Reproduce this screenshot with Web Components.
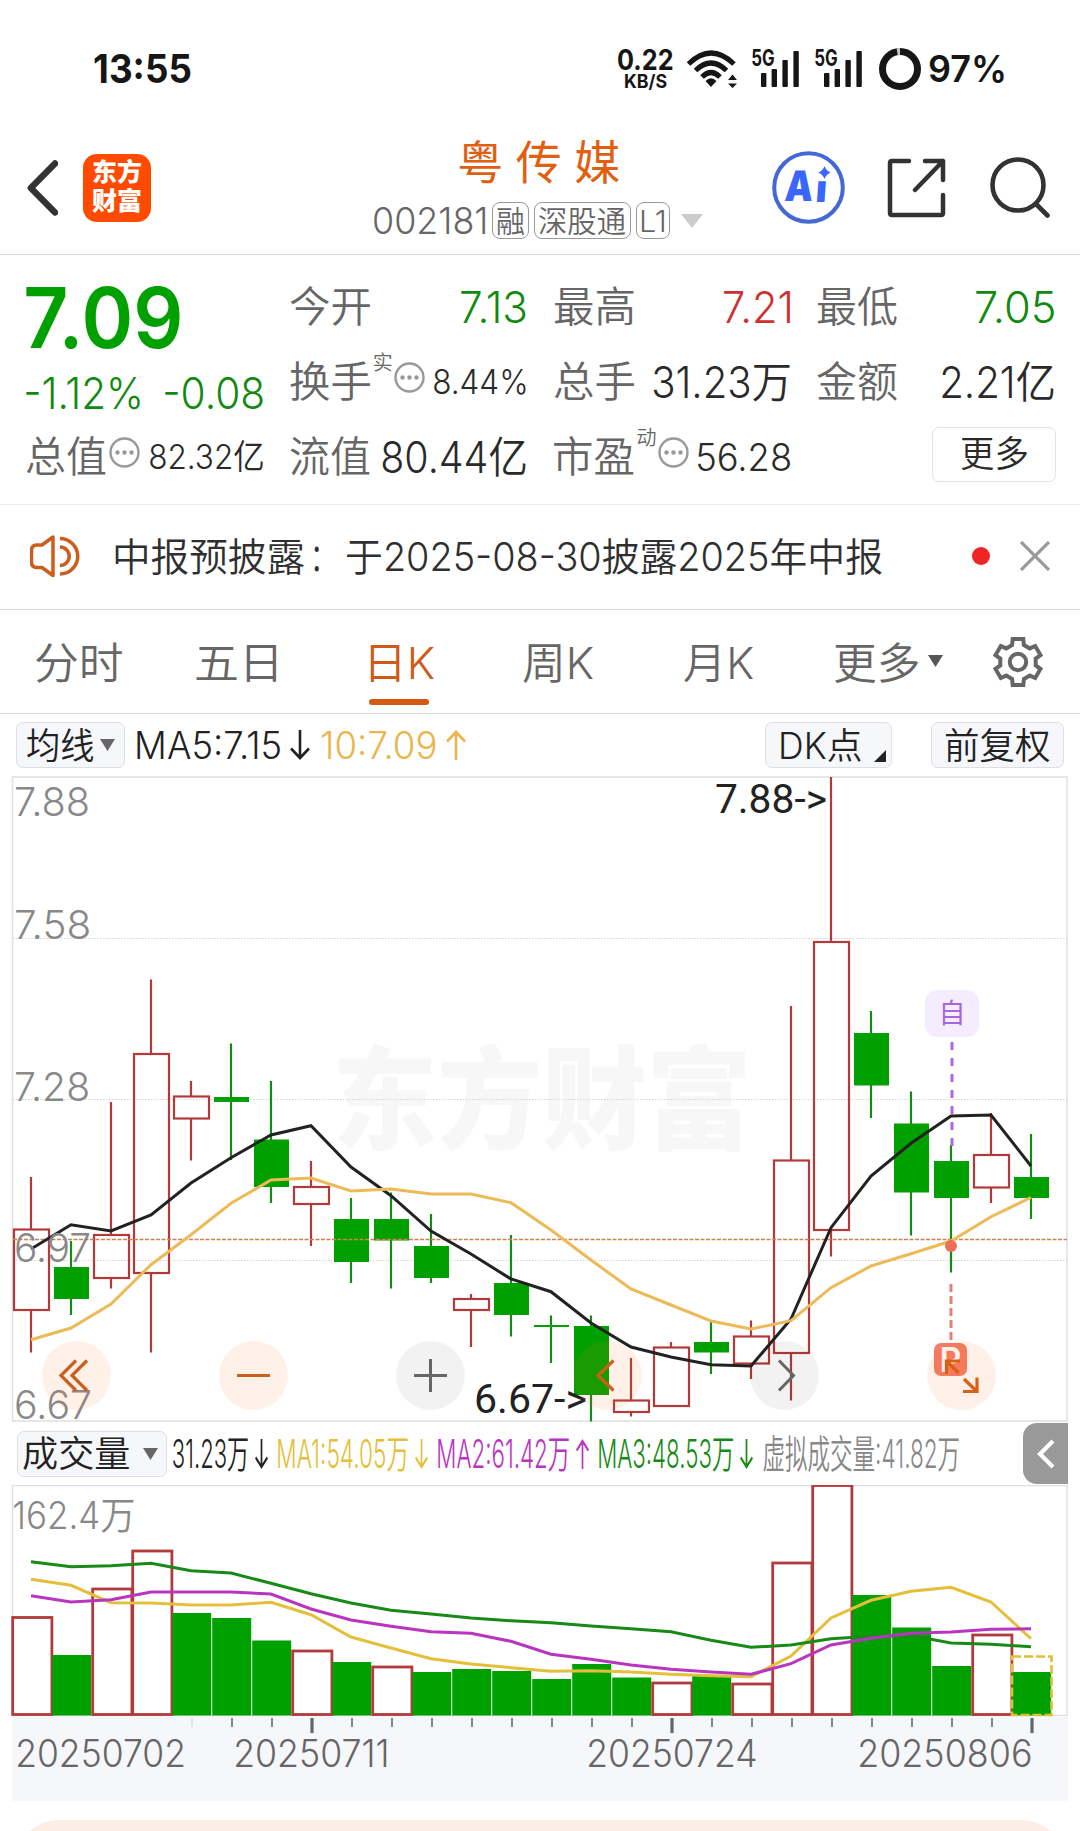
<!DOCTYPE html>
<html lang="zh-CN">
<head>
<meta charset="utf-8">
<title>粤传媒 002181</title>
<style>
  html, body {
    margin: 0;
    background: #fff;
  }

  body {
    width: 1080px;
    height: 1831px;
    overflow: hidden;
    color: #2a2a2a;
    font-family: Inter, "Noto Sans CJK SC", sans-serif;
    font-weight: 350;
  }
</style>
</head>
<body>
<status-bar></status-bar>
<stock-header code="002181">粤传媒</stock-header>
<quote-panel></quote-panel>
<notice-bar>中报预披露：于2025-08-30披露2025年中报</notice-bar>
<period-tabs></period-tabs>
<average-row></average-row>
<kline-chart></kline-chart>
<volume-row></volume-row>
<volume-chart></volume-chart>
<time-axis></time-axis>
<bottom-card></bottom-card>

<script>
const define = (name, html, setup) => {
  const template = document.createElement("template");
  template.innerHTML = html;

  customElements.define(name, class extends HTMLElement {
    constructor() {
      super();
      this.attachShadow({ mode: "open" }).appendChild(template.content.cloneNode(true));
    }

    connectedCallback() {
      if (setup) setup(this, this.shadowRoot);
    }
  });
};

const canvas = document.createElement("canvas").getContext("2d");

// Text stretched horizontally so that its ink fills exactly `w` pixels
define("fit-text", `
  <style>
    :host { display: block; flex: none; white-space: nowrap; }
    span { display: inline-block; transform-origin: 0 50%; }
  </style>
  <span><slot></slot></span>
`, (host, root) => {
  const style = getComputedStyle(host);
  const w = Number(host.getAttribute("w"));
  canvas.font = `${style.fontWeight} ${style.fontSize} ${style.fontFamily}`;
  const m = canvas.measureText(host.textContent.trim());
  const scale = w / (m.actualBoundingBoxLeft + m.actualBoundingBoxRight);
  host.style.width = w + "px";
  root.querySelector("span").style.transform =
    `translateX(${m.actualBoundingBoxLeft * scale}px) scaleX(${scale})`;
});

define("signal-bars", `
  <style>
    :host { display: block; width: 47px; height: 38px; position: relative; }
    svg { display: block; }
    fit-text { position: absolute; left: 0; top: -1px; font-size: 22.5px; line-height: 18px; font-weight: 700; }
  </style>
  <fit-text w="22">5G</fit-text>
  <svg width="47" height="38" fill="#161616">
    <rect x="9" y="23" width="5.4" height="14" rx="1"/>
    <rect x="19.6" y="19" width="5.4" height="18" rx="1"/>
    <rect x="30.4" y="10" width="5.4" height="27" rx="1"/>
    <rect x="41.4" y="1" width="5.4" height="36" rx="1"/>
  </svg>
`);

define("status-bar", `
  <style>
    :host {
      display: flex; align-items: center; box-sizing: border-box;
      height: 138px; padding: 0 76px 0 94px; color: #161616; font-weight: 700;
    }
    .time { font-size: 39px; margin-right: auto; line-height: 40px; }
    .net { display: flex; flex-direction: column; align-items: center; width: 55px; font-size: 28px; line-height: 21px; }
    .net .unit { font-size: 18.500px; line-height: 15px; margin-top: 3px; }
    .wifi { margin: 0 14px 0 14px; }
    .ring { margin: 0 8px 0 17px; }
    signal-bars + signal-bars { margin-left: 16px; }
    .pct { font-size: 37px; line-height: 40px; font-weight: 600; }
  </style>
  <fit-text class="time" w="97">13:55</fit-text>
  <div class="net"><fit-text w="55">0.22</fit-text><fit-text class="unit" w="42">KB/S</fit-text></div>
  <svg class="wifi" width="51" height="38" viewBox="0 0 51 38" fill="none" stroke="#161616" stroke-width="5">
    <path d="M1.500 14Q24 -8 47 14M8.500 20.500Q24 5.500 39.500 20.500M15 27Q24 18 33 27"/>
    <path d="M24 37L18.500 31Q24 25.500 29.500 31ZM45.500 24.500L50 30H41ZM45.500 38L41 33.500H50Z" fill="#161616" stroke="none"/>
  </svg>
  <signal-bars></signal-bars>
  <signal-bars></signal-bars>
  <svg class="ring" width="42" height="42" fill="none" stroke-width="7">
    <circle cx="21" cy="21" r="17.500" stroke="#161616"/>
    <path d="M18.200 3.700A17.500 17.500 0 0 1 21 3.500" stroke="#c8c8c8"/>
  </svg>
  <fit-text class="pct" w="75">97%</fit-text>
`);

define("stock-header", `
  <style>
    :host {
      display: flex; align-items: center; box-sizing: border-box;
      height: 117px; padding: 0 29px 17px 27px; border-bottom: 1.5px solid #d8d8d8;
    }
    svg { display: block; flex: none; }
    .logo {
      display: flex; flex-direction: column; align-items: center; justify-content: center;
      width: 68px; height: 68px; margin-left: 25px; border-radius: 14px;
      background: #ff4a00; color: #fff; font-size: 25px; line-height: 29px; font-weight: 900;
    }
    .logo span { position: relative; top: -1px; }
    .name { width: 330px; margin: 0 69px 0 223px; }
    .title {
      height: 44px; margin-top: 4px; color: #e06010; font-size: 46px; line-height: 44px; font-weight: 400;
      letter-spacing: 12.5px; text-indent: 13px; text-align: center; white-space: nowrap;
    }
    .sub { display: flex; align-items: center; height: 37px; margin-top: 18px; color: #666; }
    .code { font-size: 37px; line-height: 37px; margin-right: 7px; }
    .tag {
      display: flex; align-items: center; justify-content: center; box-sizing: border-box;
      height: 37px; margin-right: 5px; border: 1.5px solid #999; border-radius: 8px;
      font-size: 30px; line-height: 36px;
    }
    .ai { position: relative; }
    .ai fit-text {
      position: absolute; left: 13px; top: 18px; color: #3a66fb;
      font-size: 42px; line-height: 34px; font-weight: 900; transform: skewX(-4deg);
    }
    .ai .i { left: 45px; top: 20px; font-size: 38px; }
  </style>
  <svg width="31" height="56" fill="none" stroke="#333" stroke-width="6.500" stroke-linecap="round" stroke-linejoin="round">
    <path d="M28 3.500L3.800 28L28 52.500"/>
  </svg>
  <div class="logo"><span>东方</span><span>财富</span></div>
  <div class="name">
    <div class="title"><slot></slot></div>
    <div class="sub">
      <fit-text class="code" w="111"></fit-text>
      <div class="tag" style="width:37px"><fit-text w="27">融</fit-text></div>
      <div class="tag" style="width:97px"><fit-text w="87">深股通</fit-text></div>
      <div class="tag" style="width:34px"><fit-text w="23">L1</fit-text></div>
      <svg width="22" height="14" style="margin-left:6px"><path d="M0 0H22L11 14Z" fill="#ccc"/></svg>
    </div>
  </div>
  <div class="ai">
    <svg width="73" height="73">
      <circle cx="36.500" cy="36.500" r="34.300" fill="none" stroke="#4468d4" stroke-width="4"/>
    </svg>
    <fit-text w="28">A</fit-text><fit-text class="i" w="9">ı</fit-text>
    <svg width="13" height="13" style="position:absolute;left:46px;top:15px">
      <path d="M6.500 0Q8 4.500 12.500 6.500Q8 8.500 6.500 13Q5 8.500 .5 6.500Q5 4.500 6.500 0Z" fill="#3a66fb"/>
    </svg>
  </div>
  <svg width="60" height="60" style="margin-left:42px" fill="none" stroke="#333" stroke-width="4.500" stroke-linecap="round" stroke-linejoin="round">
    <path d="M22 3H5Q3 3 3 5V55Q3 57 5 57H54Q56 57 56 55V37M38 3H56V22M56 3L28 32"/>
  </svg>
  <svg width="61" height="61" style="margin-left:43px" fill="none" stroke="#333" stroke-width="4.600" stroke-linecap="round">
    <circle cx="28" cy="28" r="25.500"/><path d="M46 47L57.500 58.500"/>
  </svg>
`, (host, root) => {
  const code = root.querySelector(".code");
  code.textContent = host.getAttribute("code");
  code.connectedCallback();
});

define("more-icon", `
  <style>:host { display: block; flex: none; width: 31px; height: 31px; } svg { display: block; }</style>
  <svg width="31" height="31">
    <circle cx="15.500" cy="15.500" r="14" fill="none" stroke="#999" stroke-width="2.400"/>
    <g fill="#999"><circle cx="8.500" cy="15.500" r="2.200"/><circle cx="15.500" cy="15.500" r="2.200"/><circle cx="22.500" cy="15.500" r="2.200"/></g>
  </svg>
`);

// One label / value pair; small marks between the two go in the slot "mark"
define("quote-cell", `
  <style>
    :host { display: flex; align-items: center; height: 40px; font-size: 43px; line-height: 44px; }
    .label { color: #666; font-size: 42px; }
    .value { margin-left: auto; display: block; }
    ::slotted([slot=mark]) { flex: none; }
  </style>
  <fit-text class="label" w="80"></fit-text>
  <slot name="mark"></slot>
  <div class="value"><slot></slot></div>
`, (host, root) => {
  const label = root.querySelector(".label");
  label.textContent = host.getAttribute("label");
  label.connectedCallback();
});

define("quote-panel", `
  <style>
    :host {
      display: grid; grid-template-columns: repeat(4, 236.5px); grid-template-rows: repeat(3, 75px);
      column-gap: 27.3px; align-items: center; box-sizing: border-box; height: 250px;
      padding: 14px 26px 0; border-bottom: 1.5px solid #ebebeb;
    }
    .price { grid-row: 1 / 3; align-self: start; padding-top: 15px; color: #00a000; }
    .last { font-size: 84px; line-height: 68px; font-weight: 600; }
    .change { display: flex; justify-content: space-between; margin-top: 21px; color: #128a12; font-size: 43px; line-height: 40px; }
    .up { color: #cd3030; }
    .down { color: #128a12; }
    .small { font-size: 34px; }
    .sup { color: #666; font-size: 20px; line-height: 20px; margin: -38px 2px 0 4px; }
    .more {
      justify-self: end; display: flex; align-items: center; justify-content: center; box-sizing: border-box;
      width: 124px; height: 55px; margin: -5px -2px 0 0; border: 1.5px solid #e4e4e4; border-radius: 7px;
      font-size: 36px; line-height: 36px; padding-bottom: 1px;
    }
    more-icon { margin-top: -8px; }
  </style>
  <div class="price">
    <fit-text class="last" w="154">7.09</fit-text>
    <div class="change"><fit-text w="114">-1.12%</fit-text><fit-text w="98">-0.08</fit-text></div>
  </div>
  <quote-cell label="今开"><fit-text class="down" w="65">7.13</fit-text></quote-cell>
  <quote-cell label="最高"><fit-text class="up" w="66">7.21</fit-text></quote-cell>
  <quote-cell label="最低"><fit-text class="down" w="78">7.05</fit-text></quote-cell>
  <quote-cell label="换手">
    <fit-text slot="mark" class="sup" w="18">实</fit-text><more-icon slot="mark"></more-icon>
    <fit-text class="small" w="92">8.44%</fit-text>
  </quote-cell>
  <quote-cell label="总手"><fit-text w="137">31.23万</fit-text></quote-cell>
  <quote-cell label="金额"><fit-text w="112">2.21亿</fit-text></quote-cell>
  <quote-cell label="总值">
    <more-icon slot="mark" style="margin-left:3px"></more-icon>
    <fit-text class="small" w="113">82.32亿</fit-text>
  </quote-cell>
  <quote-cell label="流值"><fit-text w="144">80.44亿</fit-text></quote-cell>
  <quote-cell label="市盈">
    <fit-text slot="mark" class="sup" w="18">动</fit-text><more-icon slot="mark"></more-icon>
    <fit-text style="font-size:38px" w="92">56.28</fit-text>
  </quote-cell>
  <div class="more"><fit-text w="66">更多</fit-text></div>
`);

define("notice-bar", `
  <style>
    :host {
      display: flex; align-items: center; box-sizing: border-box; height: 105px;
      padding: 0 30px 2px; border-bottom: 1.5px solid #d8d8d8; font-size: 39px; line-height: 44px; color: #2f2f2f;
    }
    svg { display: block; flex: none; }
    .text { display: flex; align-items: center; margin: 2px 90px 0 35px; }
    .colon { margin: 0 28px 0 10px; }
    .dot { width: 18px; height: 18px; border-radius: 50%; background: #f12424; }
  </style>
  <svg width="50" height="44" viewBox="30 534 50 44" fill="none" stroke="#cd5d1d" stroke-width="3.500">
    <path d="M53 537L42 545H37Q31.500 545 31.500 550.500V562Q31.500 567.500 37 567.500H42L53 575.500Z" stroke-linejoin="round"/>
    <path d="M60 547A9.250 9.250 0 0 1 60 565.500M60 538.500A17.750 17.750 0 0 1 60 574"/>
  </svg>
  <div class="text"><fit-text w="189"></fit-text><fit-text class="colon" w="5"></fit-text><fit-text w="535"></fit-text></div>
  <div class="dot"></div>
  <svg width="30" height="30" style="margin-left:30px" stroke="#999" stroke-width="3.200"><path d="M1 1L29 29M29 1L1 29"/></svg>
`, (host, root) => {
  const parts = host.textContent.split(/(：)/);
  root.querySelectorAll("fit-text").forEach((el, i) => {
    el.textContent = parts[i];
    el.connectedCallback();
  });
});

define("period-tabs", `
  <style>
    :host {
      display: flex; align-items: center; box-sizing: border-box; height: 104px;
      padding: 3px 0 0 36px; border-bottom: 1.5px solid #d8d8d8; color: #666; font-size: 43.500px; line-height: 46px;
    }
    .active { position: relative; color: #d05a18; }
    .active::after {
      content: ""; position: absolute; left: -1px; top: 59px; width: 60px; height: 6px;
      border-radius: 3px; background: #d45a14;
    }
    svg { display: block; }
  </style>
  <fit-text w="86">分时</fit-text>
  <fit-text w="81" style="margin-left:74px">五日</fit-text>
  <div class="active" style="margin-left:93px"><fit-text w="64">日K</fit-text></div>
  <fit-text w="70" style="margin-left:89px">周K</fit-text>
  <fit-text w="69" style="margin-left:91px">月K</fit-text>
  <fit-text w="83" style="margin-left:82px">更多</fit-text>
  <svg width="15" height="12" style="margin-left:10px;margin-top:-4px"><path d="M0 0H15L7.500 12Z" fill="#555"/></svg>
  <svg class="gear" width="56" height="56" viewBox="-28 -28 56 56" style="margin-left:47px;margin-top:-3px" fill="none" stroke="#666" stroke-width="4">
    <path/><circle r="8.200"/>
  </svg>
`, (host, root) => {
  const points = [];
  for (let k = 0; k < 6; k++) {
    for (const [r, da] of [[18, -19], [23.500, -13], [23.500, 13], [18, 19]]) {
      const a = (k * 60 + da - 90) * Math.PI / 180;
      points.push((r * Math.cos(a)).toFixed(1) + " " + (r * Math.sin(a)).toFixed(1));
    }
  }
  root.querySelector(".gear path").setAttribute("d", "M" + points.join("L") + "Z");
});

define("chip-button", `
  <style>
    :host {
      display: flex; align-items: center; box-sizing: border-box; height: 46px; flex: none;
      border: 1.5px solid #dedfe3; border-radius: 7px; background: #f6f7fa; font-size: 36.500px; line-height: 44px;
    }
  </style>
  <slot></slot>
`);

define("arrow-mark", `
  <style>:host { display: block; flex: none; } svg { display: block; } :host([up]) svg { transform: scaleY(-1); }</style>
  <svg height="30" viewBox="0 0 20 30" preserveAspectRatio="none" fill="none" stroke="currentColor" stroke-width="2.600">
    <path d="M10 0V27.500M1 18.500L10 28L19 18.500"/>
  </svg>
`, (host, root) => root.querySelector("svg").setAttribute("width", host.getAttribute("w")));

define("average-row", `
  <style>
    :host { display: flex; align-items: center; height: 62px; padding-left: 16px; font-size: 37.500px; line-height: 44px; color: #222; }
    .ten { color: #e8b64c; }
    fit-text { position: relative; top: .5px; }
    svg { display: block; }
  </style>
  <chip-button style="width:109px"><fit-text w="67" style="margin-left:10px">均线</fit-text>
    <svg width="15" height="12" style="margin:-1px 0 0 6px"><path d="M0 0H15L7.500 12Z" fill="#666"/></svg></chip-button>
  <fit-text w="143" style="margin-left:12px">MA5:7.15</fit-text>
  <arrow-mark w="20" style="margin-left:10px"></arrow-mark>
  <fit-text class="ten" w="114" style="margin-left:12px">10:7.09</fit-text>
  <arrow-mark class="ten" up w="20" style="margin-left:10px"></arrow-mark>
  <chip-button style="width:127px;margin-left:299px"><fit-text w="80" style="margin-left:15px">DK点</fit-text>
    <svg width="12" height="12" style="margin:22px 0 0 13px"><path d="M12 0V12H0Z" fill="#222"/></svg></chip-button>
  <chip-button style="width:133px;margin-left:39px"><fit-text w="104" style="margin-left:14px">前复权</fit-text></chip-button>
`);

const GREEN = "#00a000";
const RED = "#b23a3a";
const xOf = i => 31 + 40 * i;
const polyline = (ys, color, width = 3) =>
  `<polyline points="${ys.map((y, i) => xOf(i) + "," + y).join(" ")}" fill="none" stroke="${color}" stroke-width="${width}"/>`;

// [rising, high, body top, body bottom, low]
const candles = [
  [1, 1177, 1229.5, 1310, 1352.5], [0, 1241, 1267, 1299, 1315], [1, 1102, 1235, 1278, 1288.5],
  [1, 979.5, 1054, 1273, 1352.5], [1, 1081, 1096.5, 1118.5, 1160.5], [0, 1043.5, 1097, 1102, 1160],
  [0, 1081, 1139.5, 1187, 1203], [1, 1161, 1187, 1204, 1246], [0, 1198, 1219, 1262, 1283],
  [0, 1192.5, 1219, 1240.5, 1288.5], [0, 1214, 1246, 1278, 1283], [1, 1294, 1299, 1310, 1347],
  [0, 1235, 1283, 1315, 1336.5], [0, 1315.5, 1325, 1327, 1363], [0, 1315.5, 1326, 1395, 1421.5],
  [1, 1358, 1400.5, 1412, 1416.5], [1, 1342, 1347.5, 1406, 1406], [0, 1322, 1342, 1352.5, 1374],
  [1, 1320.5, 1336.5, 1363.5, 1379], [1, 1006, 1160.5, 1353, 1400.5], [1, 777, 942, 1230, 1256.5],
  [0, 1011, 1033, 1085.5, 1118], [0, 1091.5, 1123.5, 1192.5, 1235.5], [0, 1145, 1161, 1198, 1272.5],
  [1, 1113, 1155, 1187.5, 1203], [0, 1134, 1177, 1198, 1219],
];
const ma5 = [1249, 1224.7, 1231, 1215, 1183, 1157.7, 1135, 1125.7, 1167, 1195.7, 1231, 1254, 1279, 1291.7,
  1323, 1347, 1357, 1364.7, 1366, 1319, 1227.7, 1176, 1143.3, 1116, 1115, 1166];
const ma10 = [1339.7, 1328, 1304, 1264.7, 1234.7, 1203.3, 1180, 1178, 1191, 1189, 1194, 1194, 1202.7, 1230,
  1260, 1289, 1305, 1321, 1329, 1320.7, 1287.7, 1266, 1253.7, 1241, 1216.7, 1197.5];

define("kline-chart", `
  <style>
    :host { display: block; position: relative; height: 646px; }
    svg { display: block; }
    fit-text { position: absolute; font-size: 39.500px; line-height: 40px; color: #888; }
    .peak { color: #222; font-family: Roboto, sans-serif; font-size: 40px; font-weight: 400; }
    .mark { font-size: 112px; line-height: 120px; font-weight: 900; color: #f7f7f7; }
    .self, .deal { position: absolute; display: flex; align-items: center; justify-content: center; }
    .self {
      left: 925px; top: 214px; width: 54px; height: 47px; border-radius: 12px; box-sizing: border-box;
      padding-bottom: 4px; background: #f6ecff; color: #a468d8; font-size: 27px; font-weight: 400;
    }
    .deal {
      left: 934px; top: 567px; width: 33px; height: 33px; border-radius: 7px;
      background: #f37c66; color: #fff; font-size: 34px; line-height: 33px; font-weight: 600;
    }
    .over { position: absolute; left: 0; top: 0; }
  </style>
  <fit-text class="mark" w="408" style="left:337px;top:264px">东方财富</fit-text>
  <svg class="plot over" width="1080" height="646" viewBox="0 776 1080 646"></svg>
  <fit-text w="72" style="left:16px;top:6px">7.88</fit-text>
  <fit-text w="73" style="left:16px;top:129px">7.58</fit-text>
  <fit-text w="72" style="left:16px;top:291px">7.28</fit-text>
  <fit-text w="74" style="left:16px;top:452px">6.97</fit-text>
  <fit-text w="75" style="left:16px;top:609px">6.67</fit-text>
  <fit-text class="peak" w="110" style="left:716px;top:4px">7.88-&gt;</fit-text>
  <fit-text class="peak" w="110" style="left:476px;top:604px">6.67-&gt;</fit-text>
  <div class="self">自</div>
  <div class="deal">P</div>
  <svg class="over" width="1080" height="646" viewBox="0 776 1080 646" fill="none">
    <g fill="#ff6a20" fill-opacity=".1">
      <circle cx="76.500" cy="1375.500" r="34.500"/><circle cx="253.500" cy="1375.500" r="34.500"/>
      <circle cx="607.500" cy="1375.500" r="34.500"/><circle cx="961.500" cy="1375.500" r="34.500"/>
    </g>
    <g fill="#000" fill-opacity=".05"><circle cx="430.500" cy="1375.500" r="34.500"/><circle cx="784.500" cy="1375.500" r="34.500"/></g>
    <g stroke="#c9601f" stroke-width="3.200">
      <path d="M76 1360.500L61 1375.500L76 1390.500M87 1360.500L72 1375.500L87 1390.500M237 1375.500H270M613.500 1360.500L598 1375.500L613.500 1390.500"/>
      <path d="M946.500 1374V1361H960M946.500 1361L958.500 1373M964 1379L977 1391.500M963 1391.500H977V1377.500" stroke="#d85f14"/>
    </g>
    <path d="M414 1375.500H447M430.500 1359V1392M779 1360.500L793.500 1375.500L779 1390.500" stroke="#666" stroke-width="3"/>
  </svg>
`, (host, root) => {
  const bodies = candles.map(([up, high, top, bottom, low], i) => {
    const x = xOf(i);
    return up
      ? `<path d="M${x} ${high}V${top}M${x} ${bottom}V${low}" stroke="${RED}" stroke-width="2.200"/>
         <rect x="${x - 17}" y="${top}" width="35" height="${bottom - top}" fill="none" stroke="${RED}" stroke-width="2.200"/>`
      : `<path d="M${x} ${high}V${low}" stroke="#168a16" stroke-width="2.200"/>
         <rect x="${x - 17}" y="${top}" width="35" height="${bottom - top}" fill="${GREEN}"/>`;
  }).join("");

  root.querySelector(".plot").innerHTML = `
    <path d="M12.500 1421V777H1067V1421Z" fill="none" stroke="#e0e0e0" stroke-width="1.500"/>
    <path d="M13 938.500H1067M13 1099.500H1067M13 1260.500H1067" stroke="#d4d4d4" stroke-dasharray="1.500 1.500"/>
    ${bodies}
    <path d="M13 1239.500H1067" stroke="#cf8150" stroke-width="1.400" stroke-dasharray="4 1.500"/>
    ${polyline(ma5, "#222", 3)}${polyline(ma10, "#edba58", 3)}
    <path d="M952 1042V1146" stroke="#a66bdc" stroke-width="3" stroke-dasharray="8 8"/>
    <path d="M951 1284V1341" stroke="#e87f70" stroke-width="3" stroke-dasharray="8 4"/>
    <circle cx="951" cy="1246" r="6" fill="#ee6f58"/>`;
});

define("volume-row", `
  <style>
    :host { display: flex; align-items: center; height: 63px; padding-left: 17px; font-size: 39px; line-height: 44px; color: #222; }
    chip-button { width: 150px; }
    fit-text { margin-left: 10px; }
    arrow-mark { margin-left: 7px; }
    svg { display: block; }
    .drawer {
      display: flex; align-items: center; justify-content: center; width: 45px; height: 61px; margin-left: 64px;
      border-radius: 14px 0 0 14px; background: #999;
    }
  </style>
  <chip-button><fit-text w="106" style="margin-left:5px">成交量</fit-text>
    <svg width="15" height="12" style="margin-left:14px"><path d="M0 0H15L7.500 12Z" fill="#666"/></svg></chip-button>
  <fit-text w="75" style="margin-left:6px">31.23万</fit-text><arrow-mark w="13"></arrow-mark>
  <fit-text w="130" style="color:#e4bf3a">MA1:54.05万</fit-text><arrow-mark w="13" style="color:#e4bf3a"></arrow-mark>
  <fit-text w="131" style="color:#b836bf">MA2:61.42万</fit-text><arrow-mark up w="13" style="color:#b836bf"></arrow-mark>
  <fit-text w="134" style="color:#178a17">MA3:48.53万</fit-text><arrow-mark w="13" style="color:#178a17"></arrow-mark>
  <fit-text w="196" style="color:#888">虚拟成交量:41.82万</fit-text>
  <div class="drawer"><svg width="18" height="30" fill="none" stroke="#fff" stroke-width="4.200"><path d="M16 2L3 15L16 28"/></svg></div>
`);

// [rising, top]
const volumes = [
  [1, 1617.5], [0, 1655], [1, 1589], [1, 1551], [0, 1613], [0, 1618], [0, 1640.5], [1, 1651], [0, 1662],
  [1, 1667], [0, 1672], [0, 1669], [0, 1671], [0, 1679], [0, 1664], [0, 1677.5], [1, 1683], [0, 1676],
  [1, 1684], [1, 1563], [1, 1485.5], [0, 1595], [0, 1627.5], [0, 1666], [1, 1635], [0, 1672],
];
const volumeLines = {
  "#e4bf3a": [1579.3, 1585.3, 1602.7, 1603, 1605, 1605, 1602.3, 1614.7, 1637, 1648, 1658.7, 1664, 1667.7, 1671.3,
    1670.7, 1672, 1674.3, 1675.7, 1676.7, 1656, 1618, 1600.3, 1591.3, 1587.3, 1602, 1638.7],
  "#178a17": [1561.7, 1566.7, 1565.7, 1563.3, 1570.7, 1573, 1583.3, 1593.7, 1603, 1610.3, 1614, 1618, 1620.7, 1622.7,
    1626, 1628.7, 1631.7, 1640.3, 1647.3, 1645, 1638.7, 1636.3, 1635.5, 1643, 1644.3, 1646.7],
  "#b836bf": [1595.7, 1602, 1599.7, 1592, 1592, 1592, 1594, 1609, 1620, 1626.3, 1631.7, 1633.3, 1641.3, 1654.3,
    1659.3, 1665, 1669.3, 1672, 1674.3, 1663.7, 1645, 1638.3, 1633.3, 1632, 1629.3, 1628.7],
};

define("volume-chart", `
  <style>
    :host { display: block; position: relative; height: 232px; }
    svg { display: block; }
    fit-text { position: absolute; left: 14px; top: 11px; font-size: 37.500px; line-height: 40px; color: #888; }
  </style>
  <svg width="1080" height="232" viewBox="0 1485 1080 232"></svg>
  <fit-text w="120">162.4万</fit-text>
`, (host, root) => {
  const bars = volumes.map(([up, top], i) => {
    const x = xOf(i) - 19;
    return up
      ? `<rect x="${x + .7}" y="${top}" width="39.200" height="${1714.5 - top}" fill="none" stroke="${RED}" stroke-width="2.800"/>`
      : `<rect x="${x + .2}" y="${top}" width="39" height="${1715.5 - top}" fill="${GREEN}"/>`;
  }).join("");

  root.querySelector("svg").innerHTML = `
    <path d="M12.500 1715.500V1485.500H1067V1715.500Z" fill="none" stroke="#e0e0e0" stroke-width="1.500"/>
    ${bars}
    <rect x="1012" y="1656.500" width="39.500" height="58.500" fill="none" stroke="#dfc034" stroke-width="2.600" stroke-dasharray="9 3"/>
    ${Object.entries(volumeLines).map(([color, ys]) => polyline(ys, color, 3)).join("")}`;
});

define("time-axis", `
  <style>
    :host { display: block; box-sizing: border-box; height: 84px; margin: 0 12px; background: #f6f7fa; color: #666; }
    svg { display: block; }
    .dates { display: flex; padding: 0 0 0 6px; font-size: 37.500px; line-height: 40px; }
  </style>
  <svg width="1056" height="17" viewBox="12 1717 1056 17"></svg>
  <div class="dates">
    <fit-text w="166">20250702</fit-text>
    <fit-text w="151" style="margin-left:52px">20250711</fit-text>
    <fit-text w="167" style="margin-left:202px">20250724</fit-text>
    <fit-text w="171" style="margin-left:104px">20250806</fit-text>
  </div>
`, (host, root) => {
  let ticks = `<path d="M192 1718V1727" stroke="#ddd" stroke-width="1.500"/>`;
  for (let i = 5; i < 26; i++) {
    const major = (i - 7) % 9 === 0;
    ticks += `<path d="M${xOf(i) + 1} 1718V${major ? 1733 : 1727}" stroke="${major ? "#666" : "#888"}" stroke-width="${major ? 3.2 : 2}"/>`;
  }
  root.querySelector("svg").innerHTML = ticks;
});

define("bottom-card", `
  <style>:host { display: block; height: 90px; margin: 19px 14px 0; border-radius: 48px; background: #fceee5; }</style>
`);
</script>
</body>
</html>
